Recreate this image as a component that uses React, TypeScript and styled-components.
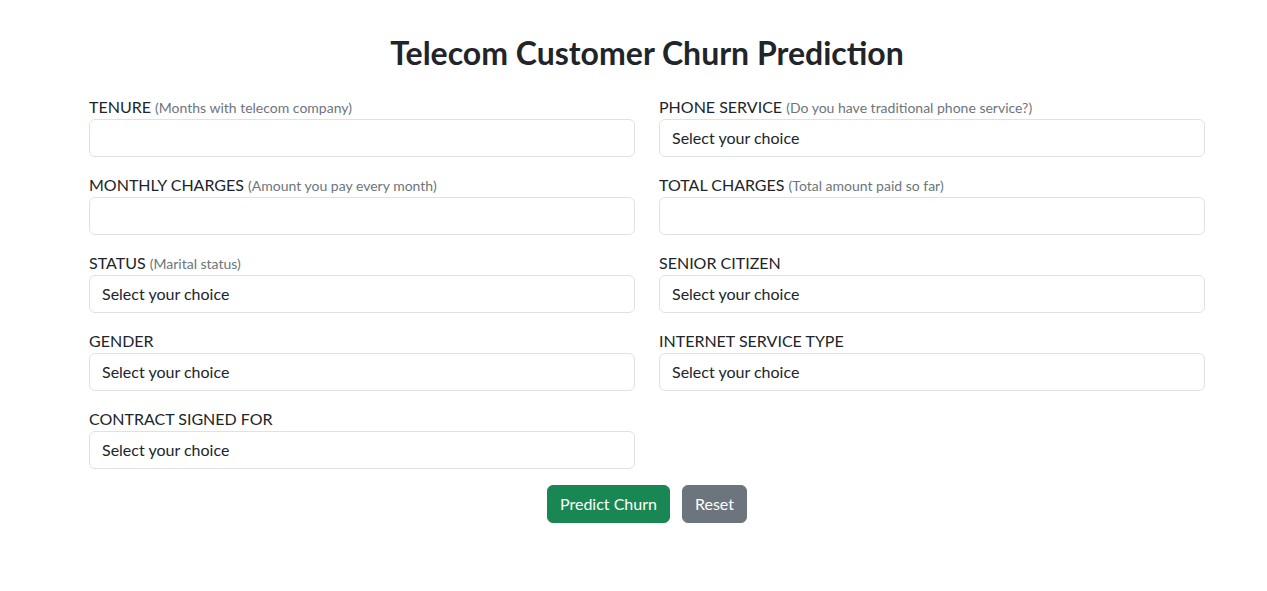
import { createGlobalStyle, styled } from "styled-components";

const GlobalStyle = createGlobalStyle`
  html, body {
    margin: 0;
    padding: 0;
    background: #fff;
  }
  body {
    font-family: Lato, "Liberation Sans", sans-serif;
    font-size: 16px;
    line-height: 1.5;
    color: #212529;
  }
  *, *::before, *::after {
    box-sizing: border-box;
  }
`;

const Page = styled.div`
  width: 1116px;
  margin-left: 89px;
  padding-top: 34px;
`;

const Title = styled.h2`
  margin: 0 0 23px;
  font-size: 32px;
  line-height: 1.2;
  font-weight: 700;
  text-align: center;
`;

const FormGrid = styled.form`
  display: grid;
  grid-template-columns: 1fr 1fr;
  column-gap: 24px;
  row-gap: 16px;
`;

const Field = styled.div`
  display: flex;
  flex-direction: column;
`;

const Label = styled.label`
  display: block;
  height: 24px;
  font-size: 16px;
  line-height: 24px;
  text-transform: uppercase;
`;

const Hint = styled.small`
  font-size: 14px;
  line-height: 1;
  color: #6c757d;
  text-transform: none;
`;

const Control = styled.div`
  height: 38px;
  padding: 6px 12px;
  border: 1px solid #dee2e6;
  border-radius: 6px;
  background: #fff;
  font-size: 16px;
  line-height: 24px;
  color: #212529;
`;

const Actions = styled.div`
  display: flex;
  justify-content: center;
  gap: 12px;
  margin-top: 16px;
`;

const Btn = styled.button<{ $variant: "success" | "secondary" }>`
  height: 38px;
  padding: 6px 12px;
  border: 1px solid ${p => (p.$variant === "success" ? "#198754" : "#6c757d")};
  border-radius: 6px;
  background: ${p => (p.$variant === "success" ? "#198754" : "#6c757d")};
  color: #fff;
  font-family: inherit;
  font-size: 16px;
  line-height: 24px;
  cursor: pointer;
`;

type FieldDef = { label: string; hint?: string; select?: boolean };

const fields: FieldDef[] = [
  { label: "Tenure", hint: "(Months with telecom company)" },
  { label: "Phone Service", hint: "(Do you have traditional phone service?)", select: true },
  { label: "Monthly Charges", hint: "(Amount you pay every month)" },
  { label: "Total Charges", hint: "(Total amount paid so far)" },
  { label: "Status", hint: "(Marital status)", select: true },
  { label: "Senior Citizen", select: true },
  { label: "Gender", select: true },
  { label: "Internet Service Type", select: true },
  { label: "Contract Signed For", select: true },
];

export default function App() {
  return (
    <>
      <GlobalStyle />
      <Page>
        <Title>Telecom Customer Churn Prediction</Title>
        <FormGrid onSubmit={e => e.preventDefault()}>
          {fields.map(f => (
            <Field key={f.label}>
              <Label>
                {f.label} {f.hint && <Hint>{f.hint}</Hint>}
              </Label>
              <Control>{f.select ? "Select your choice" : ""}</Control>
            </Field>
          ))}
        </FormGrid>
        <Actions>
          <Btn $variant="success">Predict Churn</Btn>
          <Btn $variant="secondary">Reset</Btn>
        </Actions>
      </Page>
    </>
  );
}
